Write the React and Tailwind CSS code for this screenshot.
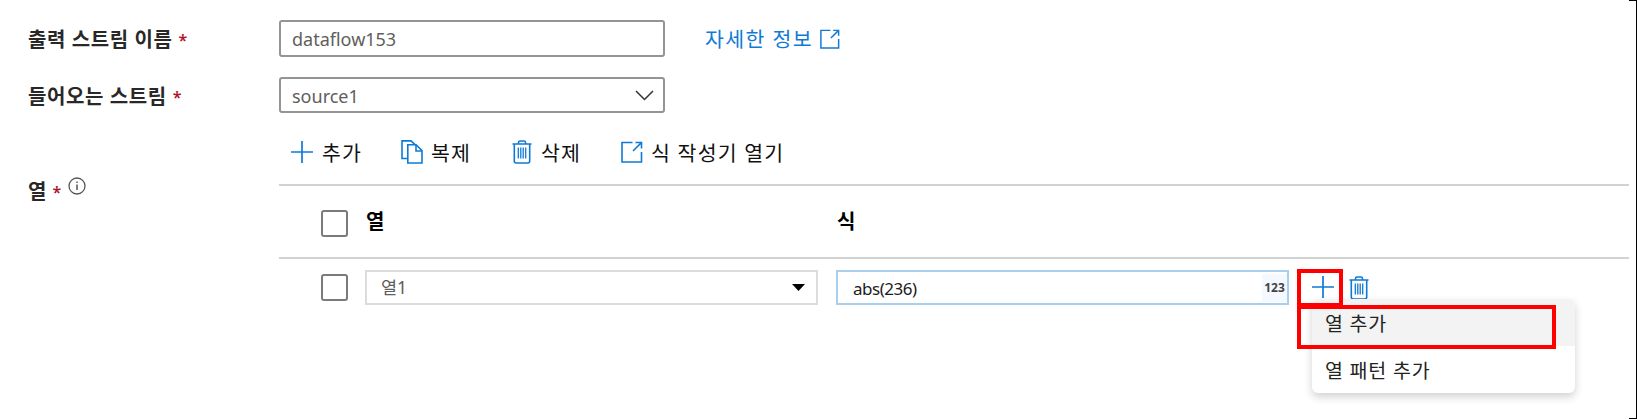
const KR = "font-['Noto_Sans','Noto_Sans_CJK_KR',sans-serif]";

function PlusIcon() {
  return (
    <svg className="size-[22px] shrink-0" viewBox="0 0 22 22" fill="none" stroke="#0f7ad6" strokeWidth="1.7">
      <path d="M11 0v22M0 11h22" />
    </svg>
  );
}

function CopyIcon() {
  return (
    <svg className="h-6 w-[22px] shrink-0" viewBox="0 0 22 24" fill="none" stroke="#0f7ad6" strokeWidth="1.6">
      <path d="M6.5 18.5H1V.9h9L14 4.6" />
      <path d="M6.8 23V4.8h8.3l5.900 5.900V23Z" />
      <path d="M15 5v6h6" />
    </svg>
  );
}

function TrashIcon() {
  return (
    <svg className="h-6 w-5 shrink-0" viewBox="0 0 20 24" fill="none" stroke="#0f7ad6" strokeWidth="1.6">
      <path d="M.5 4h19M6.5 4V2.5Q6.500 1 8 1h4q1.500 0 1.500 1.500V4" />
      <path d="M2.300 4v17q0 2 2 2h11.400q2 0 2-2V4" />
      <path d="M6.300 7.500v11M8.800 7.500v11M11.200 7.500v11M13.700 7.500v11" strokeWidth="1.300" />
    </svg>
  );
}

function OpenIcon({ className }) {
  return (
    <svg className={className} viewBox="0 0 22 22" fill="none" stroke="#0f7ad6" strokeWidth="1.6">
      <path d="M11.500 1.500H1V21h19.500V11" />
      <path d="M12 10 20.500 1.500M14.500 1.500h6v6" />
    </svg>
  );
}

function InfoIcon() {
  return (
    <svg className="mb-[13px] ml-[7px] size-[18px]" viewBox="0 0 18 18" fill="none" stroke="#555" strokeWidth="1.300">
      <circle cx="9" cy="9" r="8" />
      <path d="M9 7.500v5.500M9 4.500v1.600" strokeWidth="1.500" />
    </svg>
  );
}

function Star() {
  return <span className="ml-[6px] text-[16px] font-semibold text-[#b0152c]">*</span>;
}

function Label({ children }) {
  return (
    <div className="flex w-[279px] shrink-0 items-center pl-[28px] text-[20px] leading-[30px] font-bold tracking-[0.6px] text-[#292827]">
      <span>{children}</span>
      <Star />
    </div>
  );
}

function Checkbox() {
  return <span className="size-[27px] shrink-0 rounded-[3px] border-2 border-[#7b7b7b] bg-white" />;
}

export default function App() {
  return (
    <main className={"relative h-[419px] w-[1637px] overflow-hidden bg-white pt-5 " + KR}>
      <div className="flex h-[37px] items-center">
        <div className="pt-[2px]">
          <Label>출력 스트림 이름</Label>
        </div>
        <div className="flex h-[37px] w-[386px] items-center rounded-[3px] border-2 border-[#959493] pt-[2px] pl-[11px] text-[18px] text-[#605e5c]">
          dataflow153
        </div>
        <a className="ml-[40px] flex items-center text-[20.500px] text-[#0f7ad6]">
          <span className="leading-[30px] tracking-[1.4px]">자세한 정보</span>
          <OpenIcon className="ml-[7px] size-5" />
        </a>
      </div>
      <div className="mt-5 flex h-9 items-center">
        <div className="pt-1">
          <Label>들어오는 스트림</Label>
        </div>
        <div className="flex h-9 w-[386px] items-center justify-between rounded-[3px] border-2 border-[#959493] pr-[9px] pl-[11px] text-[18px] text-[#605e5c]">
          <span className="pt-[2px]">source1</span>
          <svg className="h-[11px] w-[19px]" viewBox="0 0 19 11" fill="none" stroke="#333" strokeWidth="1.500">
            <path d="m1 1 8.500 8.500L18 1" />
          </svg>
        </div>
      </div>
      <div className="flex">
        <div className="flex w-[279px] shrink-0 items-start pt-[64px]">
          <div className="flex h-[30px] items-center pl-[28px] text-[20px] font-bold text-[#292827]">
            <span>열</span>
            <Star />
            <InfoIcon />
          </div>
        </div>
        <section className="w-[1350px]">
          <div className="mt-[20px] flex h-[38px] items-center pl-3 text-[20.500px] tracking-[1.2px] text-[#111]">
            <PlusIcon />
            <span className="ml-[9px] w-[79px] pt-[2px]">추가</span>
            <CopyIcon />
            <span className="ml-[8px] w-[81px] pt-[2px]">복제</span>
            <TrashIcon />
            <span className="ml-[9px] w-[80px] pt-[2px]">삭제</span>
            <OpenIcon className="size-[22px]" />
            <span className="ml-[8px] pt-[2px]">식 작성기 열기</span>
          </div>
          <div className="mt-[13px] flex h-[75px] items-center border-y-2 border-[#d2d2d2] pt-[3px] pl-[42px] text-[20px] font-bold text-black">
            <Checkbox />
            <span className="mb-[3px] ml-[18px] w-[471px]">열</span>
            <span className="mb-[3px]">식</span>
          </div>
          <div className="flex pt-[11px] pl-[42px]">
            <div className="flex pt-[4px]">
              <Checkbox />
            </div>
            <div className="ml-[17px] flex h-[35px] w-[453px] items-center justify-between border-2 border-[#dcdcdc] pr-[11px] pl-[14px] text-[17.500px] text-[#605e5c]">
              <span>열1</span>
              <svg className="h-[7px] w-[13px]" viewBox="0 0 13 7">
                <path d="M0 0h13L6.500 7Z" fill="#000" />
              </svg>
            </div>
            <div className="ml-[18px] flex h-[35px] w-[453px] items-center justify-between border-2 border-[#a9cfec] pl-[15px] text-[17px] text-[#1b1b1b]">
              <span className="pt-[2px] tracking-[-0.5px]">abs(236)</span>
              <span className="flex h-[28px] w-[25px] items-center justify-center bg-[#f3f9fe] text-[12px] font-bold text-[#444]">123</span>
            </div>
            <div className="ml-[23px] flex h-9 items-start gap-[15px] pt-[6px]">
              <PlusIcon />
              <TrashIcon />
            </div>
          </div>
        </section>
      </div>

      <ul className="absolute top-[299px] left-[1312px] w-[263px] overflow-hidden rounded-[6px] bg-white text-[19.500px] tracking-[0.8px] text-[#222] shadow-[0_4px_9px_rgba(0,0,0,0.18)]">
        <li className="flex h-[47px] items-center bg-[#f3f3f3] pt-[2px] pl-[13px]">열 추가</li>
        <li className="flex h-[47px] items-center pt-[2px] pl-[13px]">열 패턴 추가</li>
      </ul>
      <div className="absolute top-[269px] left-[1297px] h-[38px] w-[46px] border-4 border-[#fe0000]" />
      <div className="absolute top-[305px] left-[1297px] h-[44px] w-[259px] border-4 border-[#fe0000]" />
      <div className="absolute top-0 right-0 h-[419px] w-2 border-y border-r border-black" />
    </main>
  );
}
